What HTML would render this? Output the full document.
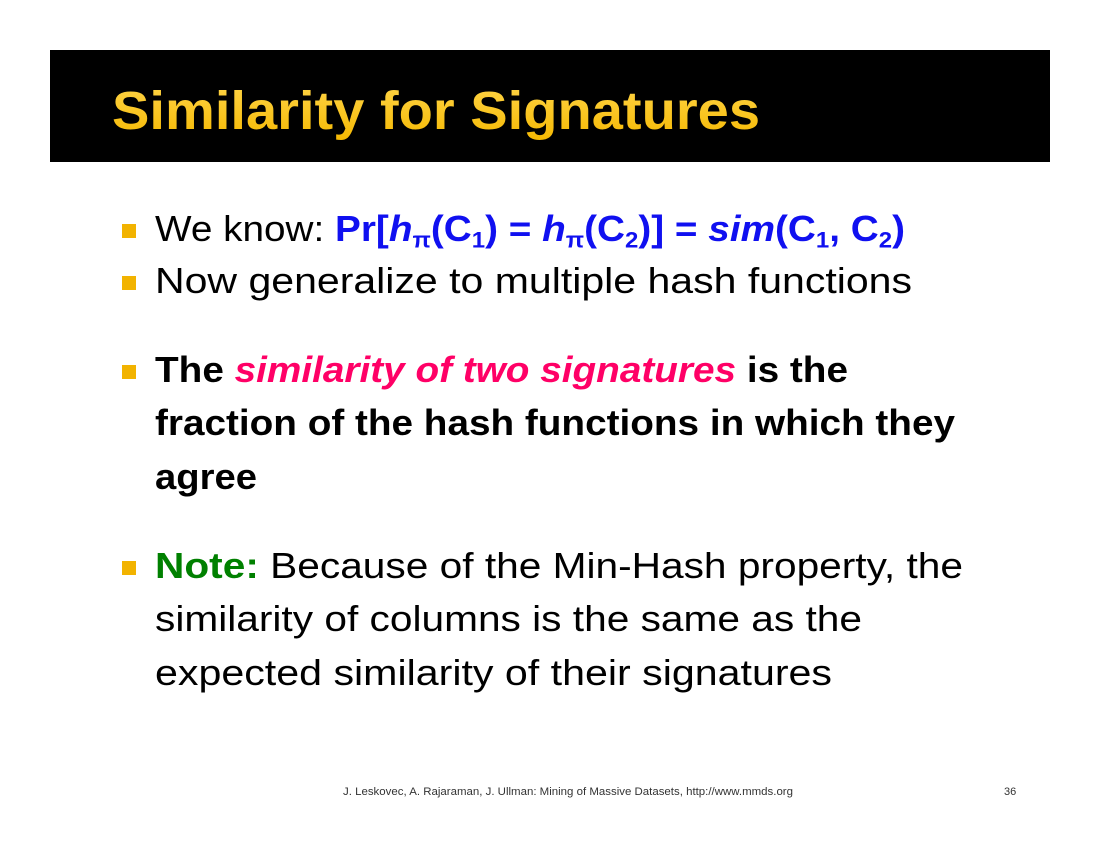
<!DOCTYPE html>
<html><head><meta charset="utf-8">
<style>
html,body{margin:0;padding:0;background:#fff;}
body{width:1100px;height:850px;position:relative;overflow:hidden;font-family:"Liberation Sans",sans-serif;}
.bar{position:absolute;left:50px;top:50px;width:1000px;height:112px;background:#000;}
.t{position:absolute;white-space:nowrap;transform-origin:0 0;}
.title{left:112px;top:80px;font-size:54px;font-weight:bold;color:#FFC000;
 background:linear-gradient(#FFD54A,#F5B800);-webkit-background-clip:text;background-clip:text;-webkit-text-fill-color:transparent;}
.l{font-size:36px;color:#000;left:155px;}
.b{font-weight:bold;}
.blue{color:#1010F0;font-weight:bold;}
.pink{color:#FF0066;font-style:italic;}
.green{color:#008000;font-weight:bold;}
.sq{position:absolute;width:14px;height:14px;background:#F2B300;left:122px;}
sub{font-size:62%;vertical-align:-0.3em;line-height:0;}
.foot{position:absolute;font-size:11px;color:#333;top:786px;}
</style></head><body>
<div class="bar"></div>
<div class="t title" id="L0">Similarity for Signatures</div>

<div class="sq" style="top:224px"></div>
<div class="t l" id="L1" style="top:208px">We know: <span class="blue">Pr[<i>h</i><sub>π</sub>(C<sub>1</sub>) = <i>h</i><sub>π</sub>(C<sub>2</sub>)] = <i>sim</i>(C<sub>1</sub>, C<sub>2</sub>)</span></div>
<div class="sq" style="top:276px"></div>
<div class="t l" id="L2" style="top:260px">Now generalize to multiple hash functions</div>

<div class="sq" style="top:365px"></div>
<div class="t l b" id="L3" style="top:349px">The <span class="pink">similarity of two signatures</span> is the</div>
<div class="t l b" id="L4" style="top:402px">fraction of the hash functions in which they</div>
<div class="t l b" id="L5" style="top:456px">agree</div>

<div class="sq" style="top:561px"></div>
<div class="t l" id="L6" style="top:545px"><span class="green">Note:</span> Because of the Min-Hash property, the</div>
<div class="t l" id="L7" style="top:598px">similarity of columns is the same as the</div>
<div class="t l" id="L8" style="top:652px">expected similarity of their signatures</div>

<div class="t foot" id="L9" style="left:343px">J. Leskovec, A. Rajaraman, J. Ullman: Mining of Massive Datasets, http://www.mmds.org</div>
<div class="foot" style="left:1004px">36</div>
<script>
var W=[648,750,757,693,800,102,808,707,677,450];
for(var i=0;i<W.length;i++){var e=document.getElementById('L'+i);var w=e.getBoundingClientRect().width;if(w>0)e.style.transform='scaleX('+(W[i]/w)+')';}
</script>
</body></html>
